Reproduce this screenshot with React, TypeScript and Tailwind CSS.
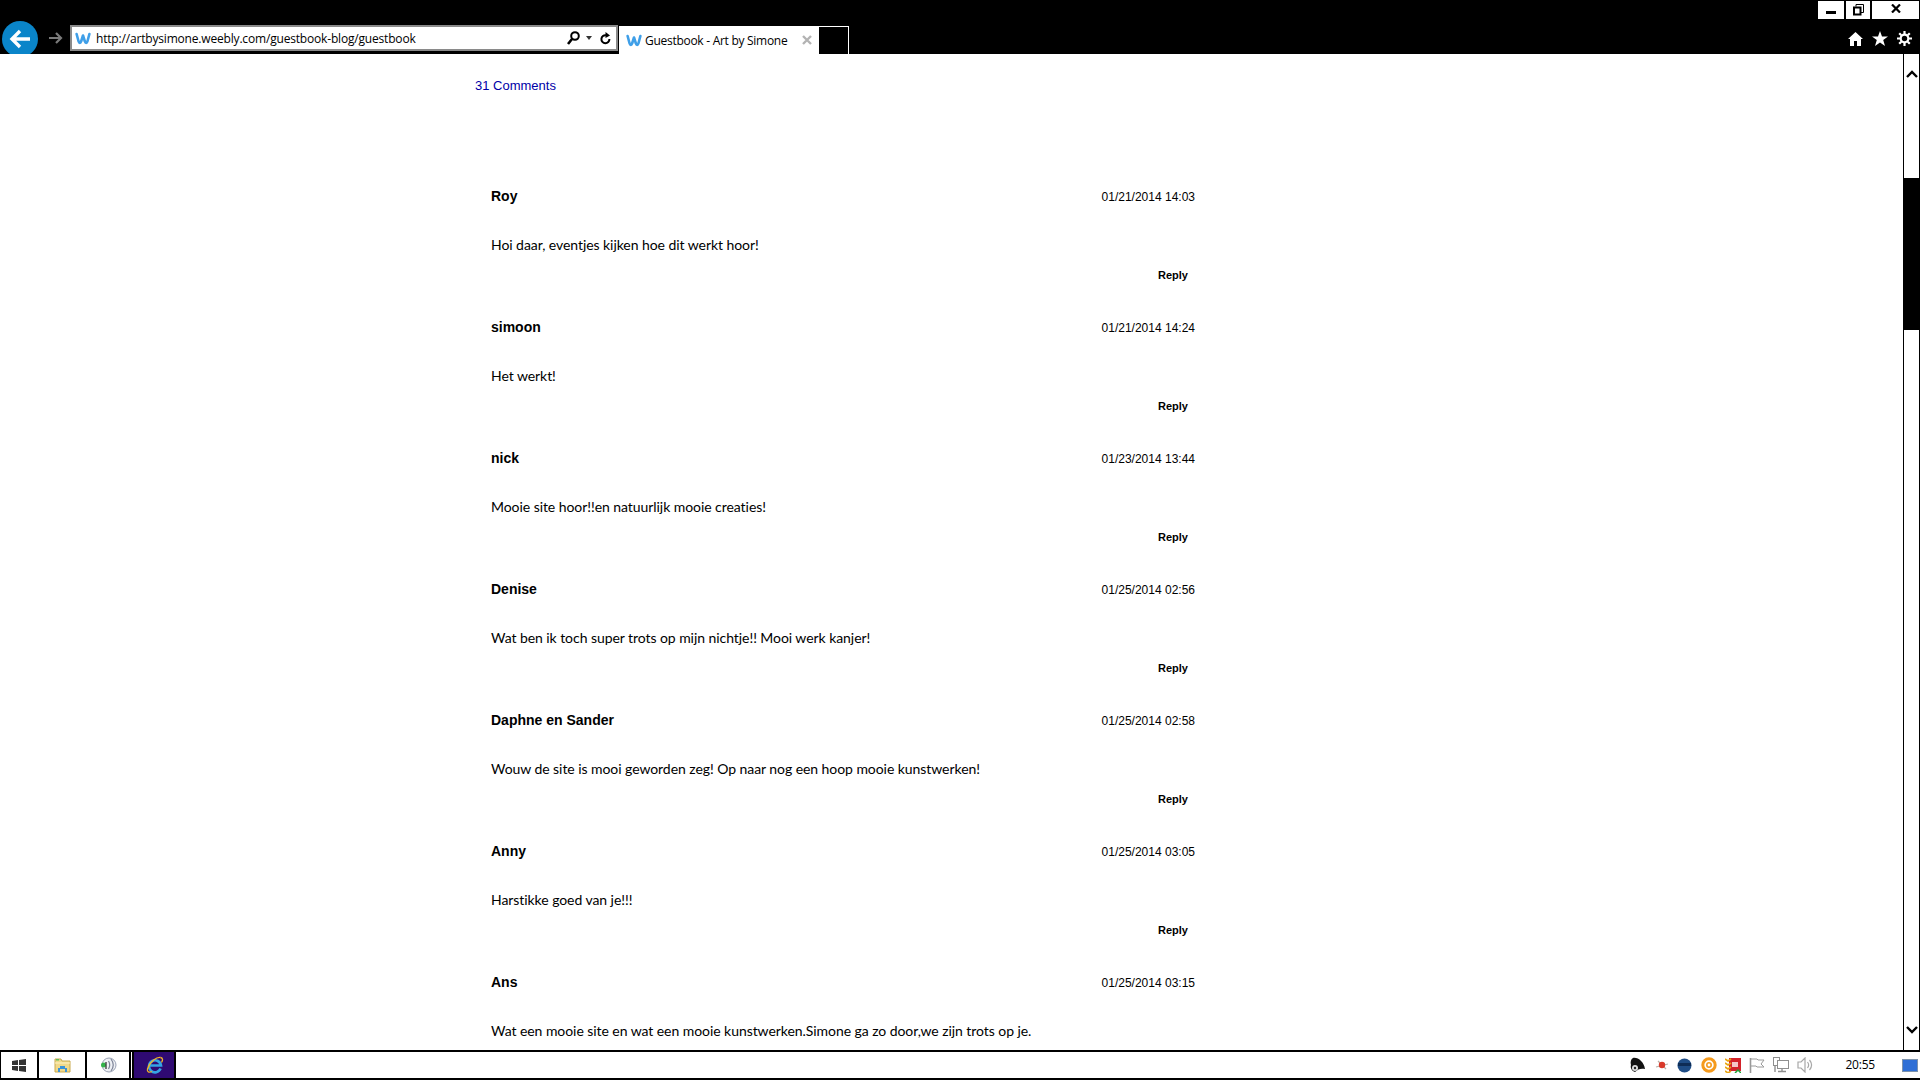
import React from 'react';

interface Comment {
  name: string;
  date: string;
  text: string;
}

const comments: Comment[] = [
  { name: 'Roy', date: '01/21/2014 14:03', text: 'Hoi daar, eventjes kijken hoe dit werkt hoor!' },
  { name: 'simoon', date: '01/21/2014 14:24', text: 'Het werkt!' },
  { name: 'nick', date: '01/23/2014 13:44', text: 'Mooie site hoor!!en natuurlijk mooie creaties!' },
  { name: 'Denise', date: '01/25/2014 02:56', text: 'Wat ben ik toch super trots op mijn nichtje!! Mooi werk kanjer!' },
  { name: 'Daphne en Sander', date: '01/25/2014 02:58', text: 'Wouw de site is mooi geworden zeg! Op naar nog een hoop mooie kunstwerken!' },
  { name: 'Anny', date: '01/25/2014 03:05', text: 'Harstikke goed van je!!!' },
  { name: 'Ans', date: '01/25/2014 03:15', text: 'Wat een mooie site en wat een mooie kunstwerken.Simone ga zo door,we zijn trots op je.' },
];

const WeeblyIcon = () => (
  <svg width="16" height="14" viewBox="0 0 16 14" fill="none" stroke="#3f9fe8" strokeWidth="2.6" strokeLinejoin="round" strokeLinecap="round">
    <path d="M1.6 3 L3.6 10.5 C4.1 12.4 5.6 12.4 6.1 10.5 L8 4.5 L9.9 10.5 C10.4 12.4 11.9 12.4 12.4 10.5 L14.4 3" />
  </svg>
);

const BackButton = () => (
  <div className="relative h-[33px] w-[36px] overflow-hidden">
    <div className="absolute left-0 top-0 flex h-[36px] w-[36px] items-center justify-center rounded-full bg-[#0a85c9]">
      <svg width="22" height="20" viewBox="0 0 22 20" fill="none" stroke="#fff" strokeWidth="3.4">
        <path d="M21 10H3M11 2L3 10L11 18" />
      </svg>
    </div>
  </div>
);

const ForwardArrow = () => (
  <svg width="14" height="12" viewBox="0 0 14 12" fill="none" stroke="#7a7a7a" strokeWidth="2.2">
    <path d="M0 6H12M7 1L12 6L7 11" />
  </svg>
);

const SearchIcon = () => (
  <svg width="13" height="14" viewBox="0 0 13 14" fill="none" stroke="#000" strokeWidth="2">
    <circle cx="8" cy="5" r="3.8" />
    <path d="M5 8L1 13" strokeWidth="2.6" />
  </svg>
);

const RefreshIcon = () => (
  <svg width="11" height="13" viewBox="0 0 11 13">
    <path d="M6 3.2A4 4 0 1 0 9.4 7" fill="none" stroke="#000" strokeWidth="2" />
    <path d="M5.5 0L10 3.4L5.5 6Z" fill="#000" />
  </svg>
);

const HomeIcon = () => (
  <svg width="15" height="14" viewBox="0 0 15 14" fill="#fff">
    <path d="M7.5 0L15 7H13V14H9V9H6V14H2V7H0Z" />
  </svg>
);

const StarIcon = () => (
  <svg width="16" height="15" viewBox="0 0 16 15" fill="#fff">
    <path d="M8 0L10 5.4H16L11.2 9L13 15L8 11.4L3 15L4.8 9L0 5.4H6Z" />
  </svg>
);

const GearIcon = () => (
  <svg width="15" height="15" viewBox="0 0 15 15" fill="none" stroke="#fff">
    <circle cx="7.5" cy="7.5" r="3.8" strokeWidth="2.2" />
    <path d="M7.5 0V3M7.5 12V15M0 7.5H3M12 7.5H15M2.2 2.2L4.3 4.3M10.7 10.7L12.8 12.8M12.8 2.2L10.7 4.3M4.3 10.7L2.2 12.8" strokeWidth="2.2" />
  </svg>
);

const WindowButtons = () => (
  <div className="flex h-[20px] justify-end gap-[2px] pr-[1px] pt-[1px]">
    <div className="flex h-[18px] w-[26px] items-end justify-center bg-white pb-[5px]">
      <div className="h-[3px] w-[10px] bg-black" />
    </div>
    <div className="flex h-[18px] w-[24px] items-center justify-center bg-white">
      <svg width="11" height="12" viewBox="0 0 11 12" fill="none" stroke="#000">
        <path d="M3 2.5V0.5H10.5V8.5H8" />
        <rect x="1" y="3.5" width="6.5" height="7" strokeWidth="2" />
      </svg>
    </div>
    <div className="flex h-[18px] w-[47px] items-start justify-center bg-white pt-[3px]">
      <svg width="10" height="9" viewBox="0 0 10 9" fill="none" stroke="#000" strokeWidth="2.2">
        <path d="M1 0.5L9 8.5M9 0.5L1 8.5" />
      </svg>
    </div>
  </div>
);

const TopBar = () => (
  <div className="h-[54px] shrink-0 bg-black">
    <WindowButtons />
    <div className="flex h-[34px] items-end">
      <div className="ml-[2px] self-end">
        <BackButton />
      </div>
      <div className="ml-[11px] mb-[10px]">
        <ForwardArrow />
      </div>
      <div className="mb-[3px] ml-[7px] flex h-[26px] w-[548px] items-center border-2 border-[#8a8a8a] bg-white pl-[3px] pr-[5px]">
        <WeeblyIcon />
        <span className="ml-[5px] flex-1 pt-[2px] font-['Open_Sans',sans-serif] text-[12px] tracking-[-0.18px] text-black">
          http://artbysimone.weebly.com/guestbook-blog/guestbook
        </span>
        <SearchIcon />
        <div className="ml-[6px] h-0 w-0 border-x-[3.5px] border-t-[4px] border-x-transparent border-t-[#333]" />
        <div className="ml-[8px]">
          <RefreshIcon />
        </div>
      </div>
      <div className="ml-[1px] flex h-[28px] w-[200px] items-center bg-white pl-[7px]">
        <WeeblyIcon />
        <span className="ml-[3px] w-[157px] pt-[2px] font-['Open_Sans',sans-serif] text-[12px] tracking-[-0.28px] text-black">
          Guestbook - Art by Simone
        </span>
        <svg width="10" height="10" viewBox="0 0 10 10" stroke="#b3b3b3" strokeWidth="2.4">
          <path d="M1 1L9 9M9 1L1 9" />
        </svg>
      </div>
      <div className="h-[28px] w-[30px] border-r border-t border-white bg-black" />
      <div className="mb-[8px] ml-auto flex items-center gap-[9px] pr-[8px]">
        <HomeIcon />
        <StarIcon />
        <GearIcon />
      </div>
    </div>
  </div>
);

const CommentRow = ({ comment, showReply }: { comment: Comment; showReply: boolean }) => (
  <div className="h-[131px] w-[704px]">
    <div className="flex h-[26px] items-center justify-between">
      <span className="text-[14px] font-bold text-black">{comment.name}</span>
      <span className="pt-[2px] text-[12px] text-black">{comment.date}</span>
    </div>
    <p className="mt-[24px] h-[24px] font-['Lato',sans-serif] text-[14px] leading-[24px] tracking-[-0.06px] text-black">
      {comment.text}
    </p>
    {showReply && (
      <div className="mt-[6px] flex h-[24px] items-center justify-end pr-[7px] text-[11px] font-bold text-black">
        Reply
      </div>
    )}
  </div>
);

const Scrollbar = () => (
  <div className="flex w-[17px] shrink-0 flex-col border-l border-r border-black pt-[1px]">
    <div className="flex h-[123px] shrink-0 justify-center bg-white pt-[15px]">
      <svg width="12" height="8" viewBox="0 0 12 8" fill="none" stroke="#000" strokeWidth="2.4">
        <path d="M1 7L6 2L11 7" />
      </svg>
    </div>
    <div className="h-[152px] shrink-0 bg-black" />
    <div className="flex flex-1 items-end justify-center bg-white pb-[16px]">
      <svg width="12" height="8" viewBox="0 0 12 8" fill="none" stroke="#000" strokeWidth="2.4">
        <path d="M1 1L6 6L11 1" />
      </svg>
    </div>
  </div>
);

const WindowsLogo = () => (
  <svg width="14" height="13" viewBox="0 0 14 13" fill="#333">
    <path d="M0 2L6 1V6H0ZM7 1L14 0V6H7ZM0 7H6V12L0 11ZM7 7H14V13L7 12Z" />
  </svg>
);

const FolderIcon = () => (
  <svg width="17" height="15" viewBox="0 0 17 15">
    <path d="M1 1H7L8 3H16V14H1Z" fill="#f1d98a" stroke="#c9a94f" />
    <path d="M1 5H16" stroke="#fff3c4" />
    <rect x="2" y="1" width="3" height="1.5" fill="#5fbf5f" />
    <path d="M4 14V10H6V8H11V10H13V14H11V11H6V14Z" fill="#3c93d6" />
  </svg>
);

const TeamspeakIcon = () => (
  <svg width="17" height="16" viewBox="0 0 17 16" fill="none">
    <circle cx="9" cy="8" r="7" fill="#eef0f4" stroke="#9aa2b5" />
    <path d="M11 2C14 6 14 10 11 14M8.5 4C10 6.5 10 9.5 8.5 12" stroke="#7b8296" strokeWidth="1.2" />
    <circle cx="3.5" cy="8" r="2.5" fill="#34b34a" />
    <path d="M6 5V12" stroke="#444" strokeWidth="1.4" />
  </svg>
);

const IeIcon = () => (
  <svg width="18" height="18" viewBox="0 0 18 18" fill="none">
    <path d="M14.6 12.6A6 6 0 1 1 15 9.5H3.5" stroke="#35a4e4" strokeWidth="2.6" />
    <path d="M14.5 1.5C11 1 4 5 1.5 13C0.8 16 3 17 6 15.5" stroke="#f0b429" strokeWidth="1.3" />
    <path d="M14.5 1.5C17 2 17 4 15.5 6.5" stroke="#f0b429" strokeWidth="1.3" />
  </svg>
);

const TaskButton = ({ className, children }: { className: string; children: React.ReactNode }) => (
  <div className={`flex h-full items-center justify-center border-r-2 border-black ${className}`}>{children}</div>
);

const TrayIcons = () => (
  <div className="flex items-center">
    <svg width="16" height="16" viewBox="0 0 16 16">
      <path d="M3 1C8 0 14 5 15 12C11 11 8 12 5 15C2 14 0 11 1 8C0 5 1 2 3 1Z" fill="#111" />
      <circle cx="5" cy="11" r="3" fill="#ddd" />
      <circle cx="5" cy="11" r="1.2" fill="#222" />
    </svg>
    <svg className="ml-[9px]" width="14" height="12" viewBox="0 0 14 12">
      <path d="M1 8L13 5M3 2L11 10" stroke="#b9b0a8" strokeWidth="1.2" />
      <circle cx="7" cy="6" r="3.2" fill="#d93a2b" />
    </svg>
    <svg className="ml-[8px]" width="15" height="15" viewBox="0 0 15 15">
      <circle cx="7.5" cy="7.5" r="7" fill="#1f4d86" />
      <path d="M1 6.5H14" stroke="#0e2c55" strokeWidth="3" />
    </svg>
    <svg className="ml-[9px]" width="16" height="16" viewBox="0 0 16 16" fill="none">
      <circle cx="8" cy="8" r="6.2" stroke="#f59a1c" strokeWidth="3" />
      <circle cx="8" cy="8" r="2.2" stroke="#f59a1c" strokeWidth="1.6" />
    </svg>
    <svg className="ml-[8px]" width="16" height="16" viewBox="0 0 16 16">
      <rect x="4" y="1" width="12" height="13" fill="#d3222a" />
      <rect x="7" y="5" width="6" height="5" fill="#f4c6c6" />
      <path d="M0 2L3 4L6 2M0 6L3 8L6 6M0 10L3 12L6 10M0 14L3 16L6 14" fill="none" stroke="#e8a512" strokeWidth="1.6" />
      <path d="M10 16L13 13L16 16" fill="none" stroke="#1fa33a" strokeWidth="1.5" />
    </svg>
    <svg className="ml-[8px]" width="16" height="16" viewBox="0 0 16 16" fill="none" stroke="#9a9a9a">
      <path d="M1.5 1V16" strokeWidth="1.6" />
      <path d="M2 2H8L9 3H15L12 7L15 10H8L7 9H2" />
    </svg>
    <svg className="ml-[8px]" width="16" height="16" viewBox="0 0 16 16" fill="none" stroke="#8f8f8f">
      <rect x="0.5" y="0.5" width="6" height="8" />
      <rect x="4.5" y="3.5" width="11" height="8" fill="#fff" />
      <path d="M9 11.5V14M5 14.5H13M2 8.5V15" strokeWidth="1.4" />
    </svg>
    <svg className="ml-[8px]" width="16" height="16" viewBox="0 0 16 16" fill="none" stroke="#a8a8a8" strokeWidth="1.2">
      <path d="M1 5H4L8 1V15L4 11H1Z" />
      <path d="M10.5 5C12 7 12 9 10.5 11M12.5 3C15 6 15 10 12.5 13" />
    </svg>
  </div>
);

const Taskbar = () => (
  <div className="flex h-[30px] shrink-0 items-stretch border-y-2 border-black bg-white">
    <div className="flex h-full items-stretch border-l border-black">
      <TaskButton className="w-[38px]">
        <WindowsLogo />
      </TaskButton>
      <TaskButton className="w-[48px]">
        <FolderIcon />
      </TaskButton>
      <TaskButton className="w-[44px]">
        <TeamspeakIcon />
      </TaskButton>
      <div className="ml-[1px] flex h-full w-[44px] items-center justify-center border-x-2 border-black bg-[#2f0a72] pl-[1px]">
        <IeIcon />
      </div>
    </div>
    <div className="ml-auto flex items-center">
      <TrayIcons />
      <span className="ml-[32px] font-['Open_Sans',sans-serif] text-[12px] tracking-[-0.2px] text-black">20:55</span>
      <div className="ml-[27px] mr-[2px] h-[13px] w-[16px] border border-[#7d93ad] bg-[#2f6fd6]" />
    </div>
  </div>
);

export default function App() {
  return (
    <div className="flex h-screen flex-col overflow-hidden bg-white font-['Liberation_Sans',Arial,sans-serif]">
      <TopBar />
      <div className="flex min-h-0 flex-1">
        <div className="min-w-0 flex-1 overflow-hidden pl-[475px] pt-[23px]">
          <div className="h-[18px] text-[13px] leading-[18px] text-[#0000a8]">31 Comments</div>
          <div className="ml-[16px] mt-[88px]">
            {comments.map((comment, i) => (
              <CommentRow key={comment.name} comment={comment} showReply={i < comments.length - 1} />
            ))}
          </div>
        </div>
        <Scrollbar />
      </div>
      <Taskbar />
    </div>
  );
}
